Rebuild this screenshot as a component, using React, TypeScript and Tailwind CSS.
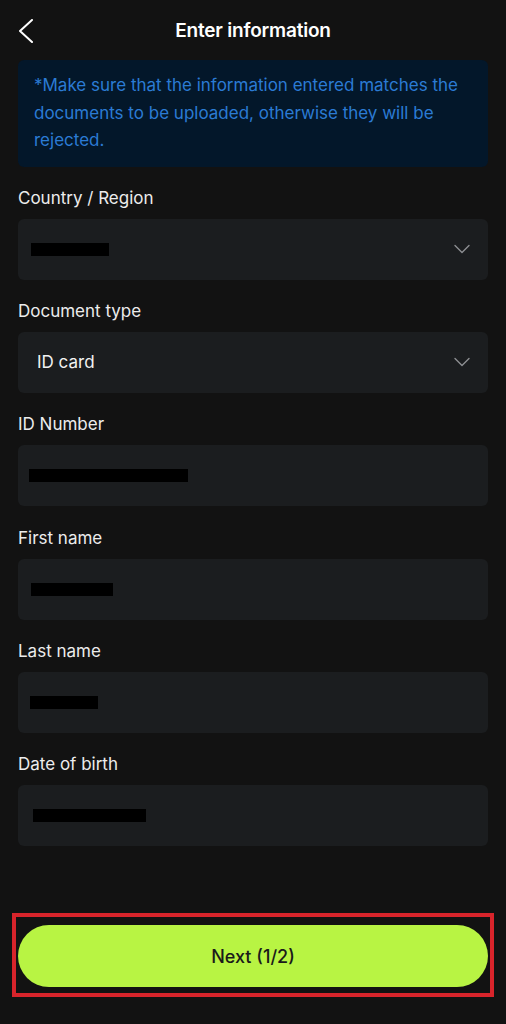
import { ChevronDown } from 'lucide-react';

const fields = [
  { label: 'Country / Region', select: true, mask: 'ml-[13px] w-[78px]' },
  { label: 'Document type', select: true, value: 'ID card' },
  { label: 'ID Number', mask: 'ml-[11px] w-[159px]' },
  { label: 'First name', mask: 'ml-[13px] w-[82px]' },
  { label: 'Last name', mask: 'ml-[12px] w-[68px]' },
  { label: 'Date of birth', mask: 'ml-[15px] w-[113px]' },
];

function Field({ label, select, value, mask }: { label: string; select?: boolean; value?: string; mask?: string }) {
  return (
    <div className="flex flex-col">
      <label className="mb-[9px] text-[17px] leading-6 text-[#ececec]">{label}</label>
      <div className="flex h-[61px] items-center justify-between rounded-md bg-[#1b1d1f] pr-[12px]">
        {value ? (
          <span className="pl-[19px] text-[17px] text-[#f2f2f2]">{value}</span>
        ) : (
          <span className={`h-[13px] bg-black ${mask}`} />
        )}
        {select && <ChevronDown className="h-7 w-7 text-[#8d8f92]" strokeWidth={1.2} />}
      </div>
    </div>
  );
}

export default function App() {
  return (
    <div className="min-h-[1024px] w-[506px] bg-[#121212] font-['Inter',sans-serif] text-white">
      <header className="grid h-[60px] grid-cols-[1fr_auto_1fr] items-center px-[18px] pt-[2px]">
        <svg width="16" height="24" viewBox="0 0 16 24" fill="none" className="text-white">
          <path d="M14 1 L2 12 L14 23" stroke="currentColor" strokeWidth="2" strokeLinecap="round" strokeLinejoin="round" />
        </svg>
        <h1 className="text-[19px] font-semibold tracking-[-0.2px]">Enter information</h1>
        <span />
      </header>

      <div className="mx-[18px] rounded-md bg-[#03172a] pb-[12px] pl-4 pr-3 pt-[12px] text-[17px] leading-[27.5px] text-[#2b7bd4]">
        *Make sure that the information entered matches the documents to be uploaded, otherwise they will be rejected.
      </div>

      <div className="mt-[19px] flex flex-col gap-[19.4px] px-[18px]">
        {fields.map((f) => (
          <Field key={f.label} {...f} />
        ))}
      </div>

      <div className="mx-[12px] mt-[67px] border-4 border-[#d8242b] pb-[6px] pl-[2px] pr-[2px] pt-[8px]">
        <button className="flex h-[62px] w-full items-center justify-center rounded-full bg-[#b8f443] text-[18px] font-medium text-[#1a1a1a]">
          Next (1/2)
        </button>
      </div>
    </div>
  );
}
